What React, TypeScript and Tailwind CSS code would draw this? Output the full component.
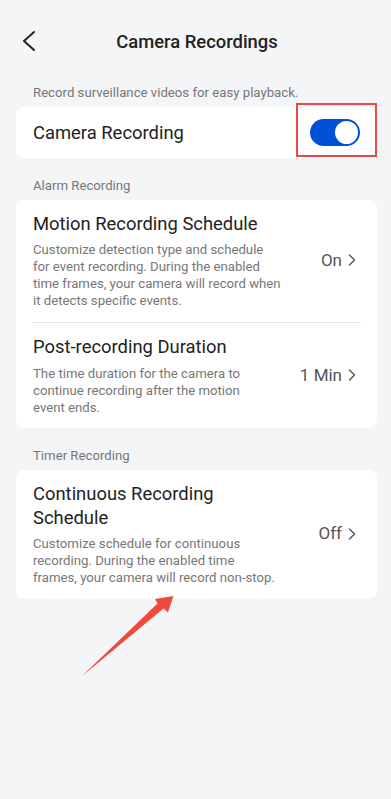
import React from "react";

function Chevron() {
  return (
    <svg width="8" height="12" viewBox="0 0 8 12" className="shrink-0">
      <polyline points="1.5,1 6.5,6 1.5,11" fill="none" stroke="#555" strokeWidth="1.4" strokeLinecap="round" strokeLinejoin="round" />
    </svg>
  );
}

function Row({ title, lines, value }: { title: string[]; lines: string[]; value: string }) {
  return (
    <div className="flex items-center">
      <div className="shrink-0">
        <div className="text-[18.4px] leading-[24px] text-[#222]">
          {title.map((t) => (
            <div key={t} className="whitespace-nowrap">{t}</div>
          ))}
        </div>
        <div className="mt-[5.5px] text-[13.2px] leading-[17px] text-[#777]">
          {lines.map((l) => (
            <div key={l} className="whitespace-nowrap">{l}</div>
          ))}
        </div>
      </div>
      <div className="ml-auto flex items-center gap-[6px] text-[17px] text-[#555]">
        <span>{value}</span>
        <Chevron />
      </div>
    </div>
  );
}

export default function App() {
  return (
    <div
      className="relative min-h-[799px] w-[391px] bg-[#f4f5f7]"
      style={{ fontFamily: "Roboto, 'Noto Sans', sans-serif" }}
    >
      {/* Header */}
      <div className="relative flex h-[84px] items-center justify-center">
        <svg width="14" height="22" viewBox="0 0 14 22" className="absolute left-[22px] top-[30px]">
          <polyline points="12,2 2,11 12,20" fill="none" stroke="#222" strokeWidth="2" strokeLinecap="round" strokeLinejoin="round" />
        </svg>
        <div className="pl-[3px] text-[18.4px] font-medium text-[#222]">Camera Recordings</div>
      </div>

      <div className="ml-4 mr-[14px]">
        <div className="pl-[17px] text-[13.2px] leading-[17px] text-[#777]">
          Record surveillance videos for easy playback.
        </div>
        <div className="relative mt-[6px] flex h-[51px] items-center rounded-[8px] bg-white pl-[17px] pr-[17px]">
          <div className="text-[18.4px] text-[#222]">Camera Recording</div>
          <div className="ml-auto flex h-[27px] w-[50px] items-center justify-end rounded-full bg-[#0050d8] pr-[2px]">
            <div className="h-[23px] w-[23px] rounded-full bg-white" />
          </div>
          <div className="absolute right-0 top-[-4px] h-[54px] w-[81px] border-2 border-[#ea4a3f]" />
        </div>

        <div className="mt-[18.5px] pl-[17px] text-[13.2px] leading-[17px] text-[#777]">Alarm Recording</div>
        <div className="mt-[6px] rounded-[8px] bg-white pl-[17px] pr-[21px]">
          <div className="pt-[12px] pb-[13px]">
            <Row
              title={["Motion Recording Schedule"]}
              lines={[
                "Customize detection type and schedule",
                "for event recording. During the enabled",
                "time frames, your camera will record when",
                "it detects specific events.",
              ]}
              value="On"
            />
          </div>
          <div className="mr-[-5px] h-px bg-[#e6e6e6]" />
          <div className="pt-[12px] pb-[12.5px]">
            <Row
              title={["Post-recording Duration"]}
              lines={[
                "The time duration for the camera to",
                "continue recording after the motion",
                "event ends.",
              ]}
              value="1 Min"
            />
          </div>
        </div>

        <div className="mt-[18.5px] pl-[17px] text-[13.2px] leading-[17px] text-[#777]">Timer Recording</div>
        <div className="mt-[6px] rounded-[8px] bg-white pl-[17px] pr-[21px] pt-[12px] pb-[12.5px]">
          <Row
            title={["Continuous Recording", "Schedule"]}
            lines={[
              "Customize schedule for continuous",
              "recording. During the enabled time",
              "frames, your camera will record non-stop.",
            ]}
            value="Off"
          />
        </div>
      </div>

      {/* Annotation arrow */}
      <svg width="391" height="799" className="pointer-events-none absolute left-0 top-0">
        <polygon
          points="81,677 157.5,603.5 155,599 173.5,596 168,612.5 163.5,608.5"
          fill="#ee4b3e"
        />
      </svg>
    </div>
  );
}
